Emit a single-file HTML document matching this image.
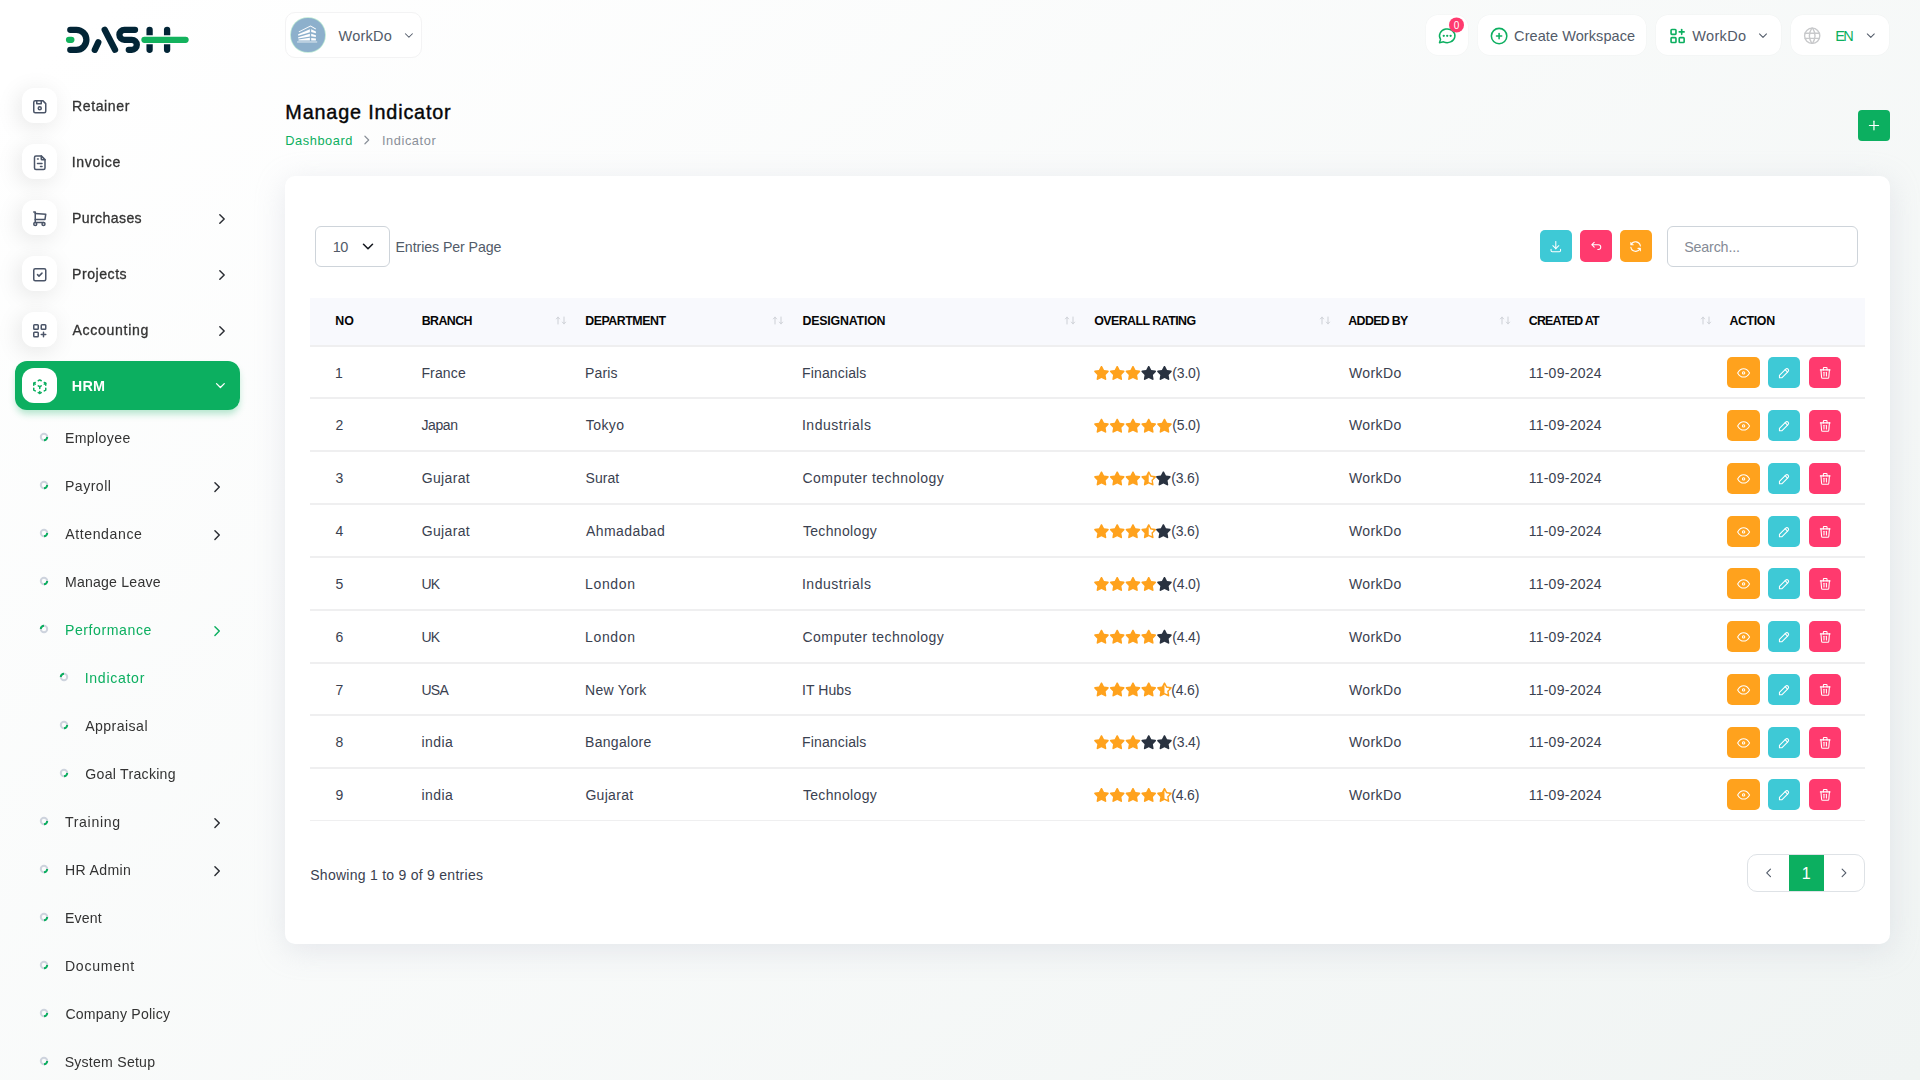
<!DOCTYPE html>
<html><head><meta charset="utf-8"><title>Manage Indicator</title><style>
html,body{margin:0;padding:0}
body{width:1920px;height:1080px;overflow:hidden;position:relative;font-family:"Liberation Sans",sans-serif;
background:linear-gradient(141.55deg,rgba(240,244,243,0) 3.46%,#f0f4f3 99.86%),#fff}
.t{position:absolute;white-space:pre}
.ic{position:absolute;overflow:visible}
.side{position:absolute;left:0;top:0;width:280px;height:1080px;will-change:transform}
.ibox{position:absolute;left:21.5px;width:35.5px;height:35px;border-radius:12px;background:#fff;box-shadow:-3px 4px 23px rgba(0,0,0,.1)}
.active{position:absolute;left:15px;top:361px;width:225px;height:49px;border-radius:12px;background:#0CAF60;box-shadow:0 5px 7px -1px rgba(12,175,96,.3)}
.wsel{position:absolute;left:285px;top:12px;width:135px;height:44px;border:1px solid #f3f3f4;border-radius:10px;background:#fff}
.avatar{position:absolute;left:291.4px;top:18.400px;width:33.2px;height:33.2px;border-radius:50%;background:#8db0cc;box-shadow:0 0 0 .8px rgba(12,175,96,.28)}
.pill{position:absolute;top:15px;height:40px;border-radius:12px;background:#fff;box-shadow:0 0 0 .6px rgba(0,0,0,.025)}
.badge{position:absolute;left:1449px;top:17px;width:15px;height:15px;border-radius:50%;background:#ff3a6e;color:#fff;font-size:9.5px;line-height:15px;text-align:center}
.addbtn{position:absolute;left:1858px;top:110px;width:32px;height:31px;border-radius:4px;background:#0CAF60}
.card{position:absolute;left:285px;top:175.5px;width:1605px;height:768.500px;border-radius:10px;background:#fff;box-shadow:0 6px 30px rgba(182,186,203,.3)}
.sel{position:absolute;left:315px;top:226px;width:72.5px;height:38.500px;border:1px solid #ced4da;border-radius:6px;background:#fff}
.search{position:absolute;left:1667px;top:226px;width:189px;height:38.500px;border:1px solid #ced4da;border-radius:6px;background:#fff}
.sbtn{position:absolute;top:230px;width:32px;height:32px;border-radius:5px}
.thead{position:absolute;left:310px;top:298px;width:1555px;height:47px;background:#f8f9fd;border-bottom:2px solid #efeff0;box-sizing:content-box}
.rline{position:absolute;left:310px;width:1555px;background:#efeff0}
.abtn{position:absolute;width:32px;height:31px;border-radius:5px}
.pag{position:absolute;left:1747px;top:854px;width:116px;height:36px;border:1px solid #dee2e6;border-radius:10px;background:#fff;overflow:hidden}
.pcur{position:absolute;left:41px;top:-1px;width:35px;height:39px;background:#0CAF60}
</style></head><body>
<div class="wsel"></div>
<div class="avatar"></div>
<svg class="ic" style="left:291px;top:18px" width="34" height="34" viewBox="291 18 34 34">
<g fill="#fff">
<path d="M298.7 31.5L310.55 25.6L315.9 28.6L315.7 29.5L310.55 26.6L299 32.3z"/>
<path d="M298.2 34.3L309.9 29.2V32.2L298.2 35.7z"/>
<path d="M298.2 37.2L309.9 33.8V36.4L298.2 38.4z"/>
<path d="M298.5 39.4L309.9 37.8V40.4H298.5z"/>
<path d="M311.2 29.2L315.9 31.4V33.2L311.2 31.9z"/>
<path d="M311.2 33.8L315.9 35.2V36.9L311.2 36.2z"/>
<path d="M311.2 37.9L315.9 38.4V40.4H311.2z"/>
<path d="M297.1 41H317.2V42.9H297.1z" opacity=".4"/>
</g></svg>
<span class="t" style="left:338.50px;top:27.90px;font-size:14.5px;line-height:16px;color:#525b69;letter-spacing:0.239px;">WorkDo</span>
<svg class="ic" style="left:401px;top:28px" width="15" height="15" viewBox="-1.543 -0.857 25.714 25.714" fill="none" stroke="#525b69" stroke-width="1.8" stroke-linecap="round" stroke-linejoin="round"><polyline points="6 9 12 15 18 9"/></svg>
<div class="pill" style="left:1426px;width:42px"></div>
<svg class="ic" style="left:1436px;top:25px" width="22" height="22" viewBox="-1.049 -0.583 25.631 25.631" fill="none" stroke="#0CAF60" stroke-width="1.7" stroke-linecap="round" stroke-linejoin="round"><path d="M3 20l1.3 -3.9a9 8 0 1 1 3.4 2.9l-4.7 1"/><g stroke-width="2.7"><line x1="12" y1="12" x2="12" y2="12.01"/><line x1="8" y1="12" x2="8" y2="12.01"/><line x1="16" y1="12" x2="16" y2="12.01"/></g></svg>
<svg class="ic" style="left:1446px;top:14px" width="22" height="22" viewBox="1446 14 22 22"><circle cx="1456.5" cy="24.9" r="7.5" fill="#ff3a6e"/></svg>
<span class="t" style="left:1456.50px;top:19.60px;font-size:10px;line-height:11px;color:#fff;transform:translateX(-50%);">0</span>
<div class="pill" style="left:1478px;width:168px"></div>
<svg class="ic" style="left:1488px;top:25px" width="22" height="22" viewBox="-0.932 -0.932 25.631 25.631" fill="none" stroke="#0CAF60" stroke-width="1.8" stroke-linecap="round" stroke-linejoin="round"><circle cx="12" cy="12" r="9"/><line x1="9" y1="12" x2="15" y2="12"/><line x1="12" y1="9" x2="12" y2="15"/></svg>
<span class="t" style="left:1514.08px;top:27.90px;font-size:14.5px;line-height:16px;color:#525b69;letter-spacing:0.081px;">Create Workspace</span>
<div class="pill" style="left:1656px;width:125px"></div>
<svg class="ic" style="left:1667px;top:26px" width="21" height="21" viewBox="-0.980 -0.245 25.714 25.714" fill="none" stroke="#0CAF60" stroke-width="2" stroke-linecap="round" stroke-linejoin="round"><rect x="4" y="4" width="6" height="6" rx="1"/><rect x="4" y="14" width="6" height="6" rx="1"/><rect x="14" y="14" width="6" height="6" rx="1"/><line x1="14" y1="7" x2="20" y2="7"/><line x1="17" y1="4" x2="17" y2="10"/></svg>
<span class="t" style="left:1692.30px;top:28.00px;font-size:14.5px;line-height:16px;color:#525b69;letter-spacing:0.319px;">WorkDo</span>
<svg class="ic" style="left:1756px;top:28px" width="15" height="15" viewBox="-0.000 -1.200 25.714 25.714" fill="none" stroke="#525b69" stroke-width="1.8" stroke-linecap="round" stroke-linejoin="round"><polyline points="6 9 12 15 18 9"/></svg>
<div class="pill" style="left:1791px;width:98px"></div>
<svg class="ic" style="left:1802px;top:25px" width="22" height="22" viewBox="-0.059 -0.768 26.010 26.010" fill="none" stroke="#c8c9cb" stroke-width="1.6" stroke-linecap="round" stroke-linejoin="round"><circle cx="12" cy="12" r="9"/><line x1="3.6" y1="9" x2="20.4" y2="9"/><line x1="3.6" y1="15" x2="20.4" y2="15"/><path d="M11.5 3a17 17 0 0 0 0 18"/><path d="M12.5 3a17 17 0 0 1 0 18"/></svg>
<span class="t" style="left:1835.14px;top:27.90px;font-size:14.5px;line-height:16px;color:#0CAF60;letter-spacing:-1.564px;">EN</span>
<svg class="ic" style="left:1863px;top:28px" width="15" height="15" viewBox="-1.371 -1.200 25.714 25.714" fill="none" stroke="#525b69" stroke-width="1.8" stroke-linecap="round" stroke-linejoin="round"><polyline points="6 9 12 15 18 9"/></svg>
<span class="t" style="left:285.32px;top:100.50px;font-size:19.8px;line-height:22px;color:#060606;letter-spacing:0.836px;-webkit-text-stroke:0.4px #060606;">Manage Indicator</span>
<span class="t" style="left:285.18px;top:132.90px;font-size:12.8px;line-height:15px;color:#0CAF60;letter-spacing:0.586px;">Dashboard</span>
<svg class="ic" style="left:359px;top:132px" width="16" height="16" viewBox="-0.480 -0.800 25.600 25.600" fill="none" stroke="#8a9099" stroke-width="1.9" stroke-linecap="round" stroke-linejoin="round"><polyline points="9 6 15 12 9 18"/></svg>
<span class="t" style="left:381.95px;top:132.90px;font-size:12.8px;line-height:15px;color:#8a9099;letter-spacing:0.578px;">Indicator</span>
<div class="addbtn"></div>
<svg class="ic" style="left:1864px;top:116px" width="20" height="20" viewBox="1864 116 20 20" stroke="#fff" stroke-linecap="round" fill="none"><path d="M1869.4 125.5H1878.6" stroke-width="1.15"/><path d="M1873.95 121.2V129.8" stroke-width="1.25"/></svg>
<div class="card"></div>
<div class="sel"></div>
<span class="t" style="left:332.81px;top:239.00px;font-size:14.5px;line-height:16px;color:#525b69;letter-spacing:-0.517px;">10</span>
<svg class="ic" style="left:359px;top:237px" width="19" height="19" viewBox="-0.000 -0.667 25.333 25.333" fill="none" stroke="#15181f" stroke-width="2.1" stroke-linecap="round" stroke-linejoin="round"><polyline points="6 9 12 15 18 9"/></svg>
<span class="t" style="left:395.46px;top:239.00px;font-size:14.2px;line-height:16px;color:#525b69;letter-spacing:-0.082px;">Entries Per Page</span>
<div class="sbtn" style="left:1540px;background:#3ec9d6"></div>
<svg class="ic" style="left:1548px;top:239px" width="16" height="16" viewBox="-1.091 -0.252 26.853 26.853" fill="none" stroke="#fff" stroke-width="1.75" stroke-linecap="round" stroke-linejoin="round"><path d="M4 17v2a2 2 0 0 0 2 2h12a2 2 0 0 0 2 -2v-2"/><polyline points="7 11 12 16 17 11"/><line x1="12" y1="4" x2="12" y2="16"/></svg>
<div class="sbtn" style="left:1580px;background:#ff3a6e"></div>
<svg class="ic" style="left:1588px;top:239px" width="16" height="16" viewBox="-1.427 -0.587 26.853 26.853" fill="none" stroke="#fff" stroke-width="1.75" stroke-linecap="round" stroke-linejoin="round"><path d="M9 13l-4 -4l4 -4m-4 4h11a4 4 0 0 1 0 8h-1"/></svg>
<div class="sbtn" style="left:1620px;background:#ffa21d"></div>
<svg class="ic" style="left:1628px;top:239px" width="16" height="16" viewBox="-0.755 -0.755 26.853 26.853" fill="none" stroke="#fff" stroke-width="1.75" stroke-linecap="round" stroke-linejoin="round"><path d="M20 11a8.1 8.1 0 0 0 -15.5 -2m-.5 -4v4h4"/><path d="M4 13a8.1 8.1 0 0 0 15.5 2m.5 4v-4h-4"/></svg>
<div class="search"></div>
<span class="t" style="left:1684.16px;top:239.00px;font-size:14.3px;line-height:16px;color:#858b96;letter-spacing:-0.179px;">Search...</span>
<div class="thead"></div>
<span class="t" style="left:335.19px;top:314.00px;font-size:12.4px;line-height:14px;color:#060606;font-weight:700;letter-spacing:0.125px;">NO</span>
<span class="t" style="left:421.69px;top:314.00px;font-size:12.4px;line-height:14px;color:#060606;font-weight:700;letter-spacing:-0.578px;">BRANCH</span>
<svg class="ic" style="left:555.0px;top:316px" width="12" height="9" viewBox="0 0 12 9" fill="none" stroke="#cdd0d6" stroke-width="1" stroke-linecap="round" stroke-linejoin="round"><path d="M3 8V1.2M1.4 2.9L3 1.2L4.6 2.9M9 1V7.8M7.4 6.1L9 7.8L10.6 6.1"/></svg>
<span class="t" style="left:585.19px;top:314.00px;font-size:12.4px;line-height:14px;color:#060606;font-weight:700;letter-spacing:-0.485px;">DEPARTMENT</span>
<svg class="ic" style="left:772.0px;top:316px" width="12" height="9" viewBox="0 0 12 9" fill="none" stroke="#cdd0d6" stroke-width="1" stroke-linecap="round" stroke-linejoin="round"><path d="M3 8V1.2M1.4 2.9L3 1.2L4.6 2.9M9 1V7.8M7.4 6.1L9 7.8L10.6 6.1"/></svg>
<span class="t" style="left:802.39px;top:314.00px;font-size:12.4px;line-height:14px;color:#060606;font-weight:700;letter-spacing:-0.196px;">DESIGNATION</span>
<svg class="ic" style="left:1064.0px;top:316px" width="12" height="9" viewBox="0 0 12 9" fill="none" stroke="#cdd0d6" stroke-width="1" stroke-linecap="round" stroke-linejoin="round"><path d="M3 8V1.2M1.4 2.9L3 1.2L4.6 2.9M9 1V7.8M7.4 6.1L9 7.8L10.6 6.1"/></svg>
<span class="t" style="left:1094.20px;top:314.00px;font-size:12.4px;line-height:14px;color:#060606;font-weight:700;letter-spacing:-0.545px;">OVERALL RATING</span>
<svg class="ic" style="left:1318.5px;top:316px" width="12" height="9" viewBox="0 0 12 9" fill="none" stroke="#cdd0d6" stroke-width="1" stroke-linecap="round" stroke-linejoin="round"><path d="M3 8V1.2M1.4 2.9L3 1.2L4.6 2.9M9 1V7.8M7.4 6.1L9 7.8L10.6 6.1"/></svg>
<span class="t" style="left:1348.35px;top:314.00px;font-size:12.4px;line-height:14px;color:#060606;font-weight:700;letter-spacing:-0.681px;">ADDED BY</span>
<svg class="ic" style="left:1498.5px;top:316px" width="12" height="9" viewBox="0 0 12 9" fill="none" stroke="#cdd0d6" stroke-width="1" stroke-linecap="round" stroke-linejoin="round"><path d="M3 8V1.2M1.4 2.9L3 1.2L4.6 2.9M9 1V7.8M7.4 6.1L9 7.8L10.6 6.1"/></svg>
<span class="t" style="left:1528.70px;top:314.00px;font-size:12.4px;line-height:14px;color:#060606;font-weight:700;letter-spacing:-0.75px;">CREATED AT</span>
<svg class="ic" style="left:1699.5px;top:316px" width="12" height="9" viewBox="0 0 12 9" fill="none" stroke="#cdd0d6" stroke-width="1" stroke-linecap="round" stroke-linejoin="round"><path d="M3 8V1.2M1.4 2.9L3 1.2L4.6 2.9M9 1V7.8M7.4 6.1L9 7.8L10.6 6.1"/></svg>
<span class="t" style="left:1729.45px;top:314.00px;font-size:12.4px;line-height:14px;color:#060606;font-weight:700;letter-spacing:-0.37px;">ACTION</span>
<svg width="0" height="0" style="position:absolute"><defs><clipPath id="rh"><rect x="288" y="0" width="288" height="512"/></clipPath></defs></svg>
<div class="rline" style="top:397px;height:2px"></div>
<span class="t" style="left:335.00px;top:365.00px;font-size:14px;line-height:16px;color:#3a4150;">1</span>
<span class="t" style="left:421.38px;top:365.00px;font-size:14px;line-height:16px;color:#3a4150;letter-spacing:0.165px;">France</span>
<span class="t" style="left:584.98px;top:365.00px;font-size:14px;line-height:16px;color:#3a4150;letter-spacing:0.153px;">Paris</span>
<span class="t" style="left:802.08px;top:365.00px;font-size:14px;line-height:16px;color:#3a4150;letter-spacing:0.131px;">Financials</span>
<svg class="ic" style="left:1093px;top:365px" width="82" height="16" viewBox="0 0 2998.9 585.1"><path d="M259.3 17.8L194 150.2 47.9 171.5c-26.2 3.8-36.7 36.1-17.7 54.6l105.7 103-25 145.5c-4.5 26.3 23.2 46 46.4 33.7L288 439.6l130.7 68.7c23.2 12.2 50.9-7.4 46.4-33.700l-25-145.5 105.7-103c19-18.5 8.5-50.8-17.7-54.6L382 150.2 316.7 17.8c-11.7-23.6-45.6-23.9-57.4 0z" fill="#ffa21d" transform="translate(21.9 32.9)"/><path d="M259.3 17.8L194 150.2 47.9 171.5c-26.2 3.8-36.7 36.1-17.7 54.6l105.7 103-25 145.5c-4.5 26.3 23.2 46 46.4 33.7L288 439.6l130.7 68.7c23.2 12.2 50.9-7.4 46.4-33.700l-25-145.5 105.7-103c19-18.5 8.5-50.8-17.7-54.6L382 150.2 316.7 17.8c-11.7-23.6-45.6-23.9-57.4 0z" fill="#ffa21d" transform="translate(597.9 32.9)"/><path d="M259.3 17.8L194 150.2 47.9 171.5c-26.2 3.8-36.7 36.1-17.7 54.6l105.7 103-25 145.5c-4.5 26.3 23.2 46 46.4 33.7L288 439.6l130.7 68.7c23.2 12.2 50.9-7.4 46.4-33.700l-25-145.5 105.7-103c19-18.5 8.5-50.8-17.7-54.6L382 150.2 316.7 17.8c-11.7-23.6-45.6-23.9-57.4 0z" fill="#ffa21d" transform="translate(1173.9 32.9)"/><path d="M259.3 17.8L194 150.2 47.9 171.5c-26.2 3.8-36.7 36.1-17.7 54.6l105.7 103-25 145.5c-4.5 26.3 23.2 46 46.4 33.7L288 439.6l130.7 68.7c23.2 12.2 50.9-7.4 46.4-33.700l-25-145.5 105.7-103c19-18.5 8.5-50.8-17.7-54.6L382 150.2 316.7 17.8c-11.7-23.6-45.6-23.9-57.4 0z" fill="#293240" transform="translate(1749.9 32.9)"/><path d="M259.3 17.8L194 150.2 47.9 171.5c-26.2 3.8-36.7 36.1-17.7 54.6l105.7 103-25 145.5c-4.5 26.3 23.2 46 46.4 33.7L288 439.6l130.7 68.7c23.2 12.2 50.9-7.4 46.4-33.700l-25-145.5 105.7-103c19-18.5 8.5-50.8-17.7-54.6L382 150.2 316.7 17.8c-11.7-23.6-45.6-23.9-57.4 0z" fill="#293240" transform="translate(2325.9 32.9)"/></svg><span class="t" style="left:1172.26px;top:365.00px;font-size:14px;line-height:16px;color:#3a4150;letter-spacing:-0.159px;">(3.0)</span>
<span class="t" style="left:1348.90px;top:365.00px;font-size:14px;line-height:16px;color:#3a4150;letter-spacing:0.414px;">WorkDo</span>
<span class="t" style="left:1528.65px;top:365.00px;font-size:14px;line-height:16px;color:#3a4150;letter-spacing:0.26px;">11-09-2024</span>
<div class="abtn" style="left:1727px;top:357.00px;background:#ffa21d;width:33px"></div>
<svg class="ic" style="left:1736px;top:365px" width="16" height="16" viewBox="-0.755 -1.259 26.853 26.853" fill="none" stroke="#fff" stroke-width="1.75" stroke-linecap="round" stroke-linejoin="round"><circle cx="12" cy="12" r="2"/><path d="M22 12c-2.667 4.667 -6 7 -10 7s-7.333 -2.333 -10 -7c2.667 -4.667 6 -7 10 -7s7.333 2.333 10 7"/></svg>
<div class="abtn" style="left:1768px;top:357.00px;background:#3ec9d6"></div>
<svg class="ic" style="left:1777px;top:365px" width="16" height="16" viewBox="-0.084 -1.427 26.853 26.853" fill="none" stroke="#fff" stroke-width="1.75" stroke-linecap="round" stroke-linejoin="round"><path d="M4 20h4l10.5 -10.5a1.5 1.5 0 0 0 -4 -4l-10.5 10.5v4"/><line x1="13.5" y1="6.5" x2="17.5" y2="10.5"/></svg>
<div class="abtn" style="left:1809px;top:357.00px;background:#ff3a6e"></div>
<svg class="ic" style="left:1817px;top:365px" width="16" height="16" viewBox="-1.572 -1.076 26.483 26.483" fill="none" stroke="#fff" stroke-width="1.75" stroke-linecap="round" stroke-linejoin="round"><line x1="4" y1="7" x2="20" y2="7"/><line x1="10" y1="11" x2="10" y2="17"/><line x1="14" y1="11" x2="14" y2="17"/><path d="M5 7l1 12a2 2 0 0 0 2 2h8a2 2 0 0 0 2 -2l1 -12"/><path d="M9 7v-3a1 1 0 0 1 1 -1h4a1 1 0 0 1 1 1v3"/></svg>
<div class="rline" style="top:450px;height:2px"></div>
<span class="t" style="left:335.40px;top:417.00px;font-size:14px;line-height:16px;color:#3a4150;">2</span>
<span class="t" style="left:421.49px;top:417.00px;font-size:14px;line-height:16px;color:#3a4150;letter-spacing:-0.395px;">Japan</span>
<span class="t" style="left:585.82px;top:417.00px;font-size:14px;line-height:16px;color:#3a4150;letter-spacing:0.408px;">Tokyo</span>
<span class="t" style="left:801.94px;top:417.00px;font-size:14px;line-height:16px;color:#3a4150;letter-spacing:0.514px;">Industrials</span>
<svg class="ic" style="left:1093px;top:418px" width="82" height="16" viewBox="0 0 2998.9 585.1"><path d="M259.3 17.8L194 150.2 47.9 171.5c-26.2 3.8-36.7 36.1-17.7 54.6l105.7 103-25 145.5c-4.5 26.3 23.2 46 46.4 33.7L288 439.6l130.7 68.7c23.2 12.2 50.9-7.4 46.4-33.700l-25-145.5 105.7-103c19-18.5 8.5-50.8-17.7-54.6L382 150.2 316.7 17.8c-11.7-23.6-45.6-23.9-57.4 0z" fill="#ffa21d" transform="translate(21.9 23.8)"/><path d="M259.3 17.8L194 150.2 47.9 171.5c-26.2 3.8-36.7 36.1-17.7 54.6l105.7 103-25 145.5c-4.5 26.3 23.2 46 46.4 33.7L288 439.6l130.7 68.7c23.2 12.2 50.9-7.4 46.4-33.700l-25-145.5 105.7-103c19-18.5 8.5-50.8-17.7-54.6L382 150.2 316.7 17.8c-11.7-23.6-45.6-23.9-57.4 0z" fill="#ffa21d" transform="translate(597.9 23.8)"/><path d="M259.3 17.8L194 150.2 47.9 171.5c-26.2 3.8-36.7 36.1-17.7 54.6l105.7 103-25 145.5c-4.5 26.3 23.2 46 46.4 33.7L288 439.6l130.7 68.7c23.2 12.2 50.9-7.4 46.4-33.700l-25-145.5 105.7-103c19-18.5 8.5-50.8-17.7-54.6L382 150.2 316.7 17.8c-11.7-23.6-45.6-23.9-57.4 0z" fill="#ffa21d" transform="translate(1173.9 23.8)"/><path d="M259.3 17.8L194 150.2 47.9 171.5c-26.2 3.8-36.7 36.1-17.7 54.6l105.7 103-25 145.5c-4.5 26.3 23.2 46 46.4 33.7L288 439.6l130.7 68.7c23.2 12.2 50.9-7.4 46.4-33.700l-25-145.5 105.7-103c19-18.5 8.5-50.8-17.7-54.6L382 150.2 316.7 17.8c-11.7-23.6-45.6-23.9-57.4 0z" fill="#ffa21d" transform="translate(1749.9 23.8)"/><path d="M259.3 17.8L194 150.2 47.9 171.5c-26.2 3.8-36.7 36.1-17.7 54.6l105.7 103-25 145.5c-4.5 26.3 23.2 46 46.4 33.7L288 439.6l130.7 68.7c23.2 12.2 50.9-7.4 46.4-33.700l-25-145.5 105.7-103c19-18.5 8.5-50.8-17.7-54.6L382 150.2 316.7 17.8c-11.7-23.6-45.6-23.9-57.4 0z" fill="#ffa21d" transform="translate(2325.9 23.8)"/></svg><span class="t" style="left:1172.26px;top:417.00px;font-size:14px;line-height:16px;color:#3a4150;letter-spacing:-0.159px;">(5.0)</span>
<span class="t" style="left:1348.90px;top:417.00px;font-size:14px;line-height:16px;color:#3a4150;letter-spacing:0.414px;">WorkDo</span>
<span class="t" style="left:1528.65px;top:417.00px;font-size:14px;line-height:16px;color:#3a4150;letter-spacing:0.26px;">11-09-2024</span>
<div class="abtn" style="left:1727px;top:410.00px;background:#ffa21d;width:33px"></div>
<svg class="ic" style="left:1736px;top:418px" width="16" height="16" viewBox="-0.755 -1.259 26.853 26.853" fill="none" stroke="#fff" stroke-width="1.75" stroke-linecap="round" stroke-linejoin="round"><circle cx="12" cy="12" r="2"/><path d="M22 12c-2.667 4.667 -6 7 -10 7s-7.333 -2.333 -10 -7c2.667 -4.667 6 -7 10 -7s7.333 2.333 10 7"/></svg>
<div class="abtn" style="left:1768px;top:410.00px;background:#3ec9d6"></div>
<svg class="ic" style="left:1777px;top:418px" width="16" height="16" viewBox="-0.084 -1.427 26.853 26.853" fill="none" stroke="#fff" stroke-width="1.75" stroke-linecap="round" stroke-linejoin="round"><path d="M4 20h4l10.5 -10.5a1.5 1.5 0 0 0 -4 -4l-10.5 10.5v4"/><line x1="13.5" y1="6.5" x2="17.5" y2="10.5"/></svg>
<div class="abtn" style="left:1809px;top:410.00px;background:#ff3a6e"></div>
<svg class="ic" style="left:1817px;top:418px" width="16" height="16" viewBox="-1.572 -1.076 26.483 26.483" fill="none" stroke="#fff" stroke-width="1.75" stroke-linecap="round" stroke-linejoin="round"><line x1="4" y1="7" x2="20" y2="7"/><line x1="10" y1="11" x2="10" y2="17"/><line x1="14" y1="11" x2="14" y2="17"/><path d="M5 7l1 12a2 2 0 0 0 2 2h8a2 2 0 0 0 2 -2l1 -12"/><path d="M9 7v-3a1 1 0 0 1 1 -1h4a1 1 0 0 1 1 1v3"/></svg>
<div class="rline" style="top:503px;height:2px"></div>
<span class="t" style="left:335.40px;top:470.00px;font-size:14px;line-height:16px;color:#3a4150;">3</span>
<span class="t" style="left:421.80px;top:470.00px;font-size:14px;line-height:16px;color:#3a4150;letter-spacing:0.322px;">Gujarat</span>
<span class="t" style="left:585.47px;top:470.00px;font-size:14px;line-height:16px;color:#3a4150;letter-spacing:0.077px;">Surat</span>
<span class="t" style="left:802.50px;top:470.00px;font-size:14px;line-height:16px;color:#3a4150;letter-spacing:0.457px;">Computer technology</span>
<svg class="ic" style="left:1093px;top:471px" width="82" height="16" viewBox="0 0 2998.9 585.1"><path d="M259.3 17.8L194 150.2 47.9 171.5c-26.2 3.8-36.7 36.1-17.7 54.6l105.7 103-25 145.5c-4.5 26.3 23.2 46 46.4 33.7L288 439.6l130.7 68.7c23.2 12.2 50.9-7.4 46.4-33.700l-25-145.5 105.7-103c19-18.5 8.5-50.8-17.7-54.6L382 150.2 316.7 17.8c-11.7-23.6-45.6-23.9-57.4 0z" fill="#ffa21d" transform="translate(21.9 14.6)"/><path d="M259.3 17.8L194 150.2 47.9 171.5c-26.2 3.8-36.7 36.1-17.7 54.6l105.7 103-25 145.5c-4.5 26.3 23.2 46 46.4 33.7L288 439.6l130.7 68.7c23.2 12.2 50.9-7.4 46.4-33.700l-25-145.5 105.7-103c19-18.5 8.5-50.8-17.7-54.6L382 150.2 316.7 17.8c-11.7-23.6-45.6-23.9-57.4 0z" fill="#ffa21d" transform="translate(597.9 14.6)"/><path d="M259.3 17.8L194 150.2 47.9 171.5c-26.2 3.8-36.7 36.1-17.7 54.6l105.7 103-25 145.5c-4.5 26.3 23.2 46 46.4 33.7L288 439.6l130.7 68.7c23.2 12.2 50.9-7.4 46.4-33.700l-25-145.5 105.7-103c19-18.5 8.5-50.8-17.7-54.6L382 150.2 316.7 17.8c-11.7-23.6-45.6-23.9-57.4 0z" fill="#ffa21d" transform="translate(1173.9 14.6)"/><g transform="translate(1749.9 14.6)"><path d="M259.3 17.8L194 150.2 47.9 171.5c-26.2 3.8-36.7 36.1-17.7 54.6l105.7 103-25 145.5c-4.5 26.3 23.2 46 46.4 33.7L288 439.6l130.7 68.7c23.2 12.2 50.9-7.4 46.4-33.700l-25-145.5 105.7-103c19-18.5 8.5-50.8-17.7-54.6L382 150.2 316.7 17.8c-11.7-23.6-45.6-23.9-57.4 0z" fill="#ffa21d"/><g clip-path="url(#rh)"><path d="M259.3 17.8L194 150.2 47.9 171.5c-26.2 3.8-36.7 36.1-17.7 54.6l105.7 103-25 145.5c-4.5 26.3 23.2 46 46.4 33.7L288 439.6l130.7 68.7c23.2 12.2 50.9-7.4 46.4-33.700l-25-145.5 105.7-103c19-18.5 8.5-50.8-17.7-54.6L382 150.2 316.7 17.8c-11.7-23.6-45.6-23.9-57.4 0z" fill="#fff" transform="translate(288 285) scale(0.64) translate(-288 -285)"/></g></g><path d="M259.3 17.8L194 150.2 47.9 171.5c-26.2 3.8-36.7 36.1-17.7 54.6l105.7 103-25 145.5c-4.5 26.3 23.2 46 46.4 33.7L288 439.6l130.7 68.7c23.2 12.2 50.9-7.4 46.4-33.700l-25-145.5 105.7-103c19-18.5 8.5-50.8-17.7-54.6L382 150.2 316.7 17.8c-11.7-23.6-45.6-23.9-57.4 0z" fill="#293240" transform="translate(2286.1 14.6)"/></svg><span class="t" style="left:1171.17px;top:470.00px;font-size:14px;line-height:16px;color:#3a4150;letter-spacing:-0.159px;">(3.6)</span>
<span class="t" style="left:1348.90px;top:470.00px;font-size:14px;line-height:16px;color:#3a4150;letter-spacing:0.414px;">WorkDo</span>
<span class="t" style="left:1528.65px;top:470.00px;font-size:14px;line-height:16px;color:#3a4150;letter-spacing:0.26px;">11-09-2024</span>
<div class="abtn" style="left:1727px;top:463.00px;background:#ffa21d;width:33px"></div>
<svg class="ic" style="left:1736px;top:471px" width="16" height="16" viewBox="-0.755 -1.259 26.853 26.853" fill="none" stroke="#fff" stroke-width="1.75" stroke-linecap="round" stroke-linejoin="round"><circle cx="12" cy="12" r="2"/><path d="M22 12c-2.667 4.667 -6 7 -10 7s-7.333 -2.333 -10 -7c2.667 -4.667 6 -7 10 -7s7.333 2.333 10 7"/></svg>
<div class="abtn" style="left:1768px;top:463.00px;background:#3ec9d6"></div>
<svg class="ic" style="left:1777px;top:471px" width="16" height="16" viewBox="-0.084 -1.427 26.853 26.853" fill="none" stroke="#fff" stroke-width="1.75" stroke-linecap="round" stroke-linejoin="round"><path d="M4 20h4l10.5 -10.5a1.5 1.5 0 0 0 -4 -4l-10.5 10.5v4"/><line x1="13.5" y1="6.5" x2="17.5" y2="10.5"/></svg>
<div class="abtn" style="left:1809px;top:463.00px;background:#ff3a6e"></div>
<svg class="ic" style="left:1817px;top:471px" width="16" height="16" viewBox="-1.572 -1.076 26.483 26.483" fill="none" stroke="#fff" stroke-width="1.75" stroke-linecap="round" stroke-linejoin="round"><line x1="4" y1="7" x2="20" y2="7"/><line x1="10" y1="11" x2="10" y2="17"/><line x1="14" y1="11" x2="14" y2="17"/><path d="M5 7l1 12a2 2 0 0 0 2 2h8a2 2 0 0 0 2 -2l1 -12"/><path d="M9 7v-3a1 1 0 0 1 1 -1h4a1 1 0 0 1 1 1v3"/></svg>
<div class="rline" style="top:556px;height:2px"></div>
<span class="t" style="left:335.40px;top:523.00px;font-size:14px;line-height:16px;color:#3a4150;">4</span>
<span class="t" style="left:421.80px;top:523.00px;font-size:14px;line-height:16px;color:#3a4150;letter-spacing:0.322px;">Gujarat</span>
<span class="t" style="left:586.10px;top:523.00px;font-size:14px;line-height:16px;color:#3a4150;letter-spacing:0.407px;">Ahmadabad</span>
<span class="t" style="left:802.92px;top:523.00px;font-size:14px;line-height:16px;color:#3a4150;letter-spacing:0.339px;">Technology</span>
<svg class="ic" style="left:1093px;top:524px" width="82" height="16" viewBox="0 0 2998.9 585.1"><path d="M259.3 17.8L194 150.2 47.9 171.5c-26.2 3.8-36.7 36.1-17.7 54.6l105.7 103-25 145.5c-4.5 26.3 23.2 46 46.4 33.7L288 439.6l130.7 68.7c23.2 12.2 50.9-7.4 46.4-33.700l-25-145.5 105.7-103c19-18.5 8.5-50.8-17.7-54.6L382 150.2 316.7 17.8c-11.7-23.6-45.6-23.9-57.4 0z" fill="#ffa21d" transform="translate(21.9 5.5)"/><path d="M259.3 17.8L194 150.2 47.9 171.5c-26.2 3.8-36.7 36.1-17.7 54.6l105.7 103-25 145.5c-4.5 26.3 23.2 46 46.4 33.7L288 439.6l130.7 68.7c23.2 12.2 50.9-7.4 46.4-33.700l-25-145.5 105.7-103c19-18.5 8.5-50.8-17.7-54.6L382 150.2 316.7 17.8c-11.7-23.6-45.6-23.9-57.4 0z" fill="#ffa21d" transform="translate(597.9 5.5)"/><path d="M259.3 17.8L194 150.2 47.9 171.5c-26.2 3.8-36.7 36.1-17.7 54.6l105.7 103-25 145.5c-4.5 26.3 23.2 46 46.4 33.7L288 439.6l130.7 68.7c23.2 12.2 50.9-7.4 46.4-33.700l-25-145.5 105.7-103c19-18.5 8.5-50.8-17.7-54.6L382 150.2 316.7 17.8c-11.7-23.6-45.6-23.9-57.4 0z" fill="#ffa21d" transform="translate(1173.9 5.5)"/><g transform="translate(1749.9 5.5)"><path d="M259.3 17.8L194 150.2 47.9 171.5c-26.2 3.8-36.7 36.1-17.7 54.6l105.7 103-25 145.5c-4.5 26.3 23.2 46 46.4 33.7L288 439.6l130.7 68.7c23.2 12.2 50.9-7.4 46.4-33.700l-25-145.5 105.7-103c19-18.5 8.5-50.8-17.7-54.6L382 150.2 316.7 17.8c-11.7-23.6-45.6-23.9-57.4 0z" fill="#ffa21d"/><g clip-path="url(#rh)"><path d="M259.3 17.8L194 150.2 47.9 171.5c-26.2 3.8-36.7 36.1-17.7 54.6l105.7 103-25 145.5c-4.5 26.3 23.2 46 46.4 33.7L288 439.6l130.7 68.7c23.2 12.2 50.9-7.4 46.4-33.700l-25-145.5 105.7-103c19-18.5 8.5-50.8-17.7-54.6L382 150.2 316.7 17.8c-11.7-23.6-45.6-23.9-57.4 0z" fill="#fff" transform="translate(288 285) scale(0.64) translate(-288 -285)"/></g></g><path d="M259.3 17.8L194 150.2 47.9 171.5c-26.2 3.8-36.7 36.1-17.7 54.6l105.7 103-25 145.5c-4.5 26.3 23.2 46 46.4 33.7L288 439.6l130.7 68.7c23.2 12.2 50.9-7.4 46.4-33.700l-25-145.5 105.7-103c19-18.5 8.5-50.8-17.7-54.6L382 150.2 316.7 17.8c-11.7-23.6-45.6-23.9-57.4 0z" fill="#293240" transform="translate(2286.1 5.5)"/></svg><span class="t" style="left:1171.17px;top:523.00px;font-size:14px;line-height:16px;color:#3a4150;letter-spacing:-0.159px;">(3.6)</span>
<span class="t" style="left:1348.90px;top:523.00px;font-size:14px;line-height:16px;color:#3a4150;letter-spacing:0.414px;">WorkDo</span>
<span class="t" style="left:1528.65px;top:523.00px;font-size:14px;line-height:16px;color:#3a4150;letter-spacing:0.26px;">11-09-2024</span>
<div class="abtn" style="left:1727px;top:516.00px;background:#ffa21d;width:33px"></div>
<svg class="ic" style="left:1736px;top:524px" width="16" height="16" viewBox="-0.755 -1.259 26.853 26.853" fill="none" stroke="#fff" stroke-width="1.75" stroke-linecap="round" stroke-linejoin="round"><circle cx="12" cy="12" r="2"/><path d="M22 12c-2.667 4.667 -6 7 -10 7s-7.333 -2.333 -10 -7c2.667 -4.667 6 -7 10 -7s7.333 2.333 10 7"/></svg>
<div class="abtn" style="left:1768px;top:516.00px;background:#3ec9d6"></div>
<svg class="ic" style="left:1777px;top:524px" width="16" height="16" viewBox="-0.084 -1.427 26.853 26.853" fill="none" stroke="#fff" stroke-width="1.75" stroke-linecap="round" stroke-linejoin="round"><path d="M4 20h4l10.5 -10.5a1.5 1.5 0 0 0 -4 -4l-10.5 10.5v4"/><line x1="13.5" y1="6.5" x2="17.5" y2="10.5"/></svg>
<div class="abtn" style="left:1809px;top:516.00px;background:#ff3a6e"></div>
<svg class="ic" style="left:1817px;top:524px" width="16" height="16" viewBox="-1.572 -1.076 26.483 26.483" fill="none" stroke="#fff" stroke-width="1.75" stroke-linecap="round" stroke-linejoin="round"><line x1="4" y1="7" x2="20" y2="7"/><line x1="10" y1="11" x2="10" y2="17"/><line x1="14" y1="11" x2="14" y2="17"/><path d="M5 7l1 12a2 2 0 0 0 2 2h8a2 2 0 0 0 2 -2l1 -12"/><path d="M9 7v-3a1 1 0 0 1 1 -1h4a1 1 0 0 1 1 1v3"/></svg>
<div class="rline" style="top:609px;height:2px"></div>
<span class="t" style="left:335.40px;top:576.00px;font-size:14px;line-height:16px;color:#3a4150;">5</span>
<span class="t" style="left:421.45px;top:576.00px;font-size:14px;line-height:16px;color:#3a4150;letter-spacing:-0.7px;">UK</span>
<span class="t" style="left:584.98px;top:576.00px;font-size:14px;line-height:16px;color:#3a4150;letter-spacing:0.672px;">London</span>
<span class="t" style="left:801.94px;top:576.00px;font-size:14px;line-height:16px;color:#3a4150;letter-spacing:0.514px;">Industrials</span>
<svg class="ic" style="left:1093px;top:576px" width="82" height="16" viewBox="0 0 2998.9 585.1"><path d="M259.3 17.8L194 150.2 47.9 171.5c-26.2 3.8-36.7 36.1-17.7 54.6l105.7 103-25 145.5c-4.5 26.3 23.2 46 46.4 33.7L288 439.6l130.7 68.7c23.2 12.2 50.9-7.4 46.4-33.700l-25-145.5 105.7-103c19-18.5 8.5-50.8-17.7-54.6L382 150.2 316.7 17.8c-11.7-23.6-45.6-23.9-57.4 0z" fill="#ffa21d" transform="translate(21.9 32.9)"/><path d="M259.3 17.8L194 150.2 47.9 171.5c-26.2 3.8-36.7 36.1-17.7 54.6l105.7 103-25 145.5c-4.5 26.3 23.2 46 46.4 33.7L288 439.6l130.7 68.7c23.2 12.2 50.9-7.4 46.4-33.700l-25-145.5 105.7-103c19-18.5 8.5-50.8-17.7-54.6L382 150.2 316.7 17.8c-11.7-23.6-45.6-23.9-57.4 0z" fill="#ffa21d" transform="translate(597.9 32.9)"/><path d="M259.3 17.8L194 150.2 47.9 171.5c-26.2 3.8-36.7 36.1-17.7 54.6l105.7 103-25 145.5c-4.5 26.3 23.2 46 46.4 33.7L288 439.6l130.7 68.7c23.2 12.2 50.9-7.4 46.4-33.700l-25-145.5 105.7-103c19-18.5 8.5-50.8-17.7-54.6L382 150.2 316.7 17.8c-11.7-23.6-45.6-23.9-57.4 0z" fill="#ffa21d" transform="translate(1173.9 32.9)"/><path d="M259.3 17.8L194 150.2 47.9 171.5c-26.2 3.8-36.7 36.1-17.7 54.6l105.7 103-25 145.5c-4.5 26.3 23.2 46 46.4 33.7L288 439.6l130.7 68.7c23.2 12.2 50.9-7.4 46.4-33.700l-25-145.5 105.7-103c19-18.5 8.5-50.8-17.7-54.6L382 150.2 316.7 17.8c-11.7-23.6-45.6-23.9-57.4 0z" fill="#ffa21d" transform="translate(1749.9 32.9)"/><path d="M259.3 17.8L194 150.2 47.9 171.5c-26.2 3.8-36.7 36.1-17.7 54.6l105.7 103-25 145.5c-4.5 26.3 23.2 46 46.4 33.7L288 439.6l130.7 68.7c23.2 12.2 50.9-7.4 46.4-33.700l-25-145.5 105.7-103c19-18.5 8.5-50.8-17.7-54.6L382 150.2 316.7 17.8c-11.7-23.6-45.6-23.9-57.4 0z" fill="#293240" transform="translate(2325.9 32.9)"/></svg><span class="t" style="left:1172.26px;top:576.00px;font-size:14px;line-height:16px;color:#3a4150;letter-spacing:-0.159px;">(4.0)</span>
<span class="t" style="left:1348.90px;top:576.00px;font-size:14px;line-height:16px;color:#3a4150;letter-spacing:0.414px;">WorkDo</span>
<span class="t" style="left:1528.65px;top:576.00px;font-size:14px;line-height:16px;color:#3a4150;letter-spacing:0.26px;">11-09-2024</span>
<div class="abtn" style="left:1727px;top:568.00px;background:#ffa21d;width:33px"></div>
<svg class="ic" style="left:1736px;top:576px" width="16" height="16" viewBox="-0.755 -1.259 26.853 26.853" fill="none" stroke="#fff" stroke-width="1.75" stroke-linecap="round" stroke-linejoin="round"><circle cx="12" cy="12" r="2"/><path d="M22 12c-2.667 4.667 -6 7 -10 7s-7.333 -2.333 -10 -7c2.667 -4.667 6 -7 10 -7s7.333 2.333 10 7"/></svg>
<div class="abtn" style="left:1768px;top:568.00px;background:#3ec9d6"></div>
<svg class="ic" style="left:1777px;top:576px" width="16" height="16" viewBox="-0.084 -1.427 26.853 26.853" fill="none" stroke="#fff" stroke-width="1.75" stroke-linecap="round" stroke-linejoin="round"><path d="M4 20h4l10.5 -10.5a1.5 1.5 0 0 0 -4 -4l-10.5 10.5v4"/><line x1="13.5" y1="6.5" x2="17.5" y2="10.5"/></svg>
<div class="abtn" style="left:1809px;top:568.00px;background:#ff3a6e"></div>
<svg class="ic" style="left:1817px;top:576px" width="16" height="16" viewBox="-1.572 -1.076 26.483 26.483" fill="none" stroke="#fff" stroke-width="1.75" stroke-linecap="round" stroke-linejoin="round"><line x1="4" y1="7" x2="20" y2="7"/><line x1="10" y1="11" x2="10" y2="17"/><line x1="14" y1="11" x2="14" y2="17"/><path d="M5 7l1 12a2 2 0 0 0 2 2h8a2 2 0 0 0 2 -2l1 -12"/><path d="M9 7v-3a1 1 0 0 1 1 -1h4a1 1 0 0 1 1 1v3"/></svg>
<div class="rline" style="top:662px;height:2px"></div>
<span class="t" style="left:335.40px;top:629.00px;font-size:14px;line-height:16px;color:#3a4150;">6</span>
<span class="t" style="left:421.45px;top:629.00px;font-size:14px;line-height:16px;color:#3a4150;letter-spacing:-0.7px;">UK</span>
<span class="t" style="left:584.98px;top:629.00px;font-size:14px;line-height:16px;color:#3a4150;letter-spacing:0.672px;">London</span>
<span class="t" style="left:802.50px;top:629.00px;font-size:14px;line-height:16px;color:#3a4150;letter-spacing:0.457px;">Computer technology</span>
<svg class="ic" style="left:1093px;top:629px" width="82" height="16" viewBox="0 0 2998.9 585.1"><path d="M259.3 17.8L194 150.2 47.9 171.5c-26.2 3.8-36.7 36.1-17.7 54.6l105.7 103-25 145.5c-4.5 26.3 23.2 46 46.4 33.7L288 439.6l130.7 68.7c23.2 12.2 50.9-7.4 46.4-33.700l-25-145.5 105.7-103c19-18.5 8.5-50.8-17.7-54.6L382 150.2 316.7 17.8c-11.7-23.6-45.6-23.9-57.4 0z" fill="#ffa21d" transform="translate(21.9 23.8)"/><path d="M259.3 17.8L194 150.2 47.9 171.5c-26.2 3.8-36.7 36.1-17.7 54.6l105.7 103-25 145.5c-4.5 26.3 23.2 46 46.4 33.7L288 439.6l130.7 68.7c23.2 12.2 50.9-7.4 46.4-33.700l-25-145.5 105.7-103c19-18.5 8.5-50.8-17.7-54.6L382 150.2 316.7 17.8c-11.7-23.6-45.6-23.9-57.4 0z" fill="#ffa21d" transform="translate(597.9 23.8)"/><path d="M259.3 17.8L194 150.2 47.9 171.5c-26.2 3.8-36.7 36.1-17.7 54.6l105.7 103-25 145.5c-4.5 26.3 23.2 46 46.4 33.7L288 439.6l130.7 68.7c23.2 12.2 50.9-7.4 46.4-33.700l-25-145.5 105.7-103c19-18.5 8.5-50.8-17.7-54.6L382 150.2 316.7 17.8c-11.7-23.6-45.6-23.9-57.4 0z" fill="#ffa21d" transform="translate(1173.9 23.8)"/><path d="M259.3 17.8L194 150.2 47.9 171.5c-26.2 3.8-36.7 36.1-17.7 54.6l105.7 103-25 145.5c-4.5 26.3 23.2 46 46.4 33.7L288 439.6l130.7 68.7c23.2 12.2 50.9-7.4 46.4-33.700l-25-145.5 105.7-103c19-18.5 8.5-50.8-17.7-54.6L382 150.2 316.7 17.8c-11.7-23.6-45.6-23.9-57.4 0z" fill="#ffa21d" transform="translate(1749.9 23.8)"/><path d="M259.3 17.8L194 150.2 47.9 171.5c-26.2 3.8-36.7 36.1-17.7 54.6l105.7 103-25 145.5c-4.5 26.3 23.2 46 46.4 33.7L288 439.6l130.7 68.7c23.2 12.2 50.9-7.4 46.4-33.700l-25-145.5 105.7-103c19-18.5 8.5-50.8-17.7-54.6L382 150.2 316.7 17.8c-11.7-23.6-45.6-23.9-57.4 0z" fill="#293240" transform="translate(2325.9 23.8)"/></svg><span class="t" style="left:1172.26px;top:629.00px;font-size:14px;line-height:16px;color:#3a4150;letter-spacing:-0.159px;">(4.4)</span>
<span class="t" style="left:1348.90px;top:629.00px;font-size:14px;line-height:16px;color:#3a4150;letter-spacing:0.414px;">WorkDo</span>
<span class="t" style="left:1528.65px;top:629.00px;font-size:14px;line-height:16px;color:#3a4150;letter-spacing:0.26px;">11-09-2024</span>
<div class="abtn" style="left:1727px;top:621.00px;background:#ffa21d;width:33px"></div>
<svg class="ic" style="left:1736px;top:629px" width="16" height="16" viewBox="-0.755 -1.259 26.853 26.853" fill="none" stroke="#fff" stroke-width="1.75" stroke-linecap="round" stroke-linejoin="round"><circle cx="12" cy="12" r="2"/><path d="M22 12c-2.667 4.667 -6 7 -10 7s-7.333 -2.333 -10 -7c2.667 -4.667 6 -7 10 -7s7.333 2.333 10 7"/></svg>
<div class="abtn" style="left:1768px;top:621.00px;background:#3ec9d6"></div>
<svg class="ic" style="left:1777px;top:629px" width="16" height="16" viewBox="-0.084 -1.427 26.853 26.853" fill="none" stroke="#fff" stroke-width="1.75" stroke-linecap="round" stroke-linejoin="round"><path d="M4 20h4l10.5 -10.5a1.5 1.5 0 0 0 -4 -4l-10.5 10.5v4"/><line x1="13.5" y1="6.5" x2="17.5" y2="10.5"/></svg>
<div class="abtn" style="left:1809px;top:621.00px;background:#ff3a6e"></div>
<svg class="ic" style="left:1817px;top:629px" width="16" height="16" viewBox="-1.572 -1.076 26.483 26.483" fill="none" stroke="#fff" stroke-width="1.75" stroke-linecap="round" stroke-linejoin="round"><line x1="4" y1="7" x2="20" y2="7"/><line x1="10" y1="11" x2="10" y2="17"/><line x1="14" y1="11" x2="14" y2="17"/><path d="M5 7l1 12a2 2 0 0 0 2 2h8a2 2 0 0 0 2 -2l1 -12"/><path d="M9 7v-3a1 1 0 0 1 1 -1h4a1 1 0 0 1 1 1v3"/></svg>
<div class="rline" style="top:714px;height:2px"></div>
<span class="t" style="left:335.40px;top:682.00px;font-size:14px;line-height:16px;color:#3a4150;">7</span>
<span class="t" style="left:421.45px;top:682.00px;font-size:14px;line-height:16px;color:#3a4150;letter-spacing:-0.75px;">USA</span>
<span class="t" style="left:584.98px;top:682.00px;font-size:14px;line-height:16px;color:#3a4150;letter-spacing:0.308px;">New York</span>
<span class="t" style="left:801.94px;top:682.00px;font-size:14px;line-height:16px;color:#3a4150;letter-spacing:0.089px;">IT Hubs</span>
<svg class="ic" style="left:1093px;top:682px" width="82" height="16" viewBox="0 0 2998.9 585.1"><path d="M259.3 17.8L194 150.2 47.9 171.5c-26.2 3.8-36.7 36.1-17.7 54.6l105.7 103-25 145.5c-4.5 26.3 23.2 46 46.4 33.7L288 439.6l130.7 68.7c23.2 12.2 50.9-7.4 46.4-33.700l-25-145.5 105.7-103c19-18.5 8.5-50.8-17.7-54.6L382 150.2 316.7 17.8c-11.7-23.6-45.6-23.9-57.4 0z" fill="#ffa21d" transform="translate(21.9 14.6)"/><path d="M259.3 17.8L194 150.2 47.9 171.5c-26.2 3.8-36.7 36.1-17.7 54.6l105.7 103-25 145.5c-4.5 26.3 23.2 46 46.4 33.7L288 439.6l130.7 68.7c23.2 12.2 50.9-7.4 46.4-33.700l-25-145.5 105.7-103c19-18.5 8.5-50.8-17.7-54.6L382 150.2 316.7 17.8c-11.7-23.6-45.6-23.9-57.4 0z" fill="#ffa21d" transform="translate(597.9 14.6)"/><path d="M259.3 17.8L194 150.2 47.9 171.5c-26.2 3.8-36.7 36.1-17.7 54.6l105.7 103-25 145.5c-4.5 26.3 23.2 46 46.4 33.7L288 439.6l130.7 68.7c23.2 12.2 50.9-7.4 46.4-33.700l-25-145.5 105.7-103c19-18.5 8.5-50.8-17.7-54.6L382 150.2 316.7 17.8c-11.7-23.6-45.6-23.9-57.4 0z" fill="#ffa21d" transform="translate(1173.9 14.6)"/><path d="M259.3 17.8L194 150.2 47.9 171.5c-26.2 3.8-36.7 36.1-17.7 54.6l105.7 103-25 145.5c-4.5 26.3 23.2 46 46.4 33.7L288 439.6l130.7 68.7c23.2 12.2 50.9-7.4 46.4-33.700l-25-145.5 105.7-103c19-18.5 8.5-50.8-17.7-54.6L382 150.2 316.7 17.8c-11.7-23.6-45.6-23.9-57.4 0z" fill="#ffa21d" transform="translate(1749.9 14.6)"/><g transform="translate(2325.9 14.6)"><path d="M259.3 17.8L194 150.2 47.9 171.5c-26.2 3.8-36.7 36.1-17.7 54.6l105.7 103-25 145.5c-4.5 26.3 23.2 46 46.4 33.7L288 439.6l130.7 68.7c23.2 12.2 50.9-7.4 46.4-33.700l-25-145.5 105.7-103c19-18.5 8.5-50.8-17.7-54.6L382 150.2 316.7 17.8c-11.7-23.6-45.6-23.9-57.4 0z" fill="#ffa21d"/><g clip-path="url(#rh)"><path d="M259.3 17.8L194 150.2 47.9 171.5c-26.2 3.8-36.7 36.1-17.7 54.6l105.7 103-25 145.5c-4.5 26.3 23.2 46 46.4 33.7L288 439.6l130.7 68.7c23.2 12.2 50.9-7.4 46.4-33.700l-25-145.5 105.7-103c19-18.5 8.5-50.8-17.7-54.6L382 150.2 316.7 17.8c-11.7-23.6-45.6-23.9-57.4 0z" fill="#fff" transform="translate(288 285) scale(0.64) translate(-288 -285)"/></g></g></svg><span class="t" style="left:1171.17px;top:682.00px;font-size:14px;line-height:16px;color:#3a4150;letter-spacing:-0.159px;">(4.6)</span>
<span class="t" style="left:1348.90px;top:682.00px;font-size:14px;line-height:16px;color:#3a4150;letter-spacing:0.414px;">WorkDo</span>
<span class="t" style="left:1528.65px;top:682.00px;font-size:14px;line-height:16px;color:#3a4150;letter-spacing:0.26px;">11-09-2024</span>
<div class="abtn" style="left:1727px;top:674.00px;background:#ffa21d;width:33px"></div>
<svg class="ic" style="left:1736px;top:682px" width="16" height="16" viewBox="-0.755 -1.259 26.853 26.853" fill="none" stroke="#fff" stroke-width="1.75" stroke-linecap="round" stroke-linejoin="round"><circle cx="12" cy="12" r="2"/><path d="M22 12c-2.667 4.667 -6 7 -10 7s-7.333 -2.333 -10 -7c2.667 -4.667 6 -7 10 -7s7.333 2.333 10 7"/></svg>
<div class="abtn" style="left:1768px;top:674.00px;background:#3ec9d6"></div>
<svg class="ic" style="left:1777px;top:682px" width="16" height="16" viewBox="-0.084 -1.427 26.853 26.853" fill="none" stroke="#fff" stroke-width="1.75" stroke-linecap="round" stroke-linejoin="round"><path d="M4 20h4l10.5 -10.5a1.5 1.5 0 0 0 -4 -4l-10.5 10.5v4"/><line x1="13.5" y1="6.5" x2="17.5" y2="10.5"/></svg>
<div class="abtn" style="left:1809px;top:674.00px;background:#ff3a6e"></div>
<svg class="ic" style="left:1817px;top:682px" width="16" height="16" viewBox="-1.572 -1.076 26.483 26.483" fill="none" stroke="#fff" stroke-width="1.75" stroke-linecap="round" stroke-linejoin="round"><line x1="4" y1="7" x2="20" y2="7"/><line x1="10" y1="11" x2="10" y2="17"/><line x1="14" y1="11" x2="14" y2="17"/><path d="M5 7l1 12a2 2 0 0 0 2 2h8a2 2 0 0 0 2 -2l1 -12"/><path d="M9 7v-3a1 1 0 0 1 1 -1h4a1 1 0 0 1 1 1v3"/></svg>
<div class="rline" style="top:767px;height:2px"></div>
<span class="t" style="left:335.40px;top:734.00px;font-size:14px;line-height:16px;color:#3a4150;">8</span>
<span class="t" style="left:421.59px;top:734.00px;font-size:14px;line-height:16px;color:#3a4150;letter-spacing:0.419px;">india</span>
<span class="t" style="left:584.98px;top:734.00px;font-size:14px;line-height:16px;color:#3a4150;letter-spacing:0.321px;">Bangalore</span>
<span class="t" style="left:802.08px;top:734.00px;font-size:14px;line-height:16px;color:#3a4150;letter-spacing:0.131px;">Financials</span>
<svg class="ic" style="left:1093px;top:735px" width="82" height="16" viewBox="0 0 2998.9 585.1"><path d="M259.3 17.8L194 150.2 47.9 171.5c-26.2 3.8-36.7 36.1-17.7 54.6l105.7 103-25 145.5c-4.5 26.3 23.2 46 46.4 33.7L288 439.6l130.7 68.7c23.2 12.2 50.9-7.4 46.4-33.700l-25-145.5 105.7-103c19-18.5 8.5-50.8-17.7-54.6L382 150.2 316.7 17.8c-11.7-23.6-45.6-23.9-57.4 0z" fill="#ffa21d" transform="translate(21.9 5.5)"/><path d="M259.3 17.8L194 150.2 47.9 171.5c-26.2 3.8-36.7 36.1-17.7 54.6l105.7 103-25 145.5c-4.5 26.3 23.2 46 46.4 33.7L288 439.6l130.7 68.7c23.2 12.2 50.9-7.4 46.4-33.700l-25-145.5 105.7-103c19-18.5 8.5-50.8-17.7-54.6L382 150.2 316.7 17.8c-11.7-23.6-45.6-23.9-57.4 0z" fill="#ffa21d" transform="translate(597.9 5.5)"/><path d="M259.3 17.8L194 150.2 47.9 171.5c-26.2 3.8-36.7 36.1-17.7 54.6l105.7 103-25 145.5c-4.5 26.3 23.2 46 46.4 33.7L288 439.6l130.7 68.7c23.2 12.2 50.9-7.4 46.4-33.700l-25-145.5 105.7-103c19-18.5 8.5-50.8-17.7-54.6L382 150.2 316.7 17.8c-11.7-23.6-45.6-23.9-57.4 0z" fill="#ffa21d" transform="translate(1173.9 5.5)"/><path d="M259.3 17.8L194 150.2 47.9 171.5c-26.2 3.8-36.7 36.1-17.7 54.6l105.7 103-25 145.5c-4.5 26.3 23.2 46 46.4 33.7L288 439.6l130.7 68.7c23.2 12.2 50.9-7.4 46.4-33.700l-25-145.5 105.7-103c19-18.5 8.5-50.8-17.7-54.6L382 150.2 316.7 17.8c-11.7-23.6-45.6-23.9-57.4 0z" fill="#293240" transform="translate(1749.9 5.5)"/><path d="M259.3 17.8L194 150.2 47.9 171.5c-26.2 3.8-36.7 36.1-17.7 54.6l105.7 103-25 145.5c-4.5 26.3 23.2 46 46.4 33.7L288 439.6l130.7 68.7c23.2 12.2 50.9-7.4 46.4-33.700l-25-145.5 105.7-103c19-18.5 8.5-50.8-17.7-54.6L382 150.2 316.7 17.8c-11.7-23.6-45.6-23.9-57.4 0z" fill="#293240" transform="translate(2325.9 5.5)"/></svg><span class="t" style="left:1172.26px;top:734.00px;font-size:14px;line-height:16px;color:#3a4150;letter-spacing:-0.159px;">(3.4)</span>
<span class="t" style="left:1348.90px;top:734.00px;font-size:14px;line-height:16px;color:#3a4150;letter-spacing:0.414px;">WorkDo</span>
<span class="t" style="left:1528.65px;top:734.00px;font-size:14px;line-height:16px;color:#3a4150;letter-spacing:0.26px;">11-09-2024</span>
<div class="abtn" style="left:1727px;top:727.00px;background:#ffa21d;width:33px"></div>
<svg class="ic" style="left:1736px;top:735px" width="16" height="16" viewBox="-0.755 -1.259 26.853 26.853" fill="none" stroke="#fff" stroke-width="1.75" stroke-linecap="round" stroke-linejoin="round"><circle cx="12" cy="12" r="2"/><path d="M22 12c-2.667 4.667 -6 7 -10 7s-7.333 -2.333 -10 -7c2.667 -4.667 6 -7 10 -7s7.333 2.333 10 7"/></svg>
<div class="abtn" style="left:1768px;top:727.00px;background:#3ec9d6"></div>
<svg class="ic" style="left:1777px;top:735px" width="16" height="16" viewBox="-0.084 -1.427 26.853 26.853" fill="none" stroke="#fff" stroke-width="1.75" stroke-linecap="round" stroke-linejoin="round"><path d="M4 20h4l10.5 -10.5a1.5 1.5 0 0 0 -4 -4l-10.5 10.5v4"/><line x1="13.5" y1="6.5" x2="17.5" y2="10.5"/></svg>
<div class="abtn" style="left:1809px;top:727.00px;background:#ff3a6e"></div>
<svg class="ic" style="left:1817px;top:735px" width="16" height="16" viewBox="-1.572 -1.076 26.483 26.483" fill="none" stroke="#fff" stroke-width="1.75" stroke-linecap="round" stroke-linejoin="round"><line x1="4" y1="7" x2="20" y2="7"/><line x1="10" y1="11" x2="10" y2="17"/><line x1="14" y1="11" x2="14" y2="17"/><path d="M5 7l1 12a2 2 0 0 0 2 2h8a2 2 0 0 0 2 -2l1 -12"/><path d="M9 7v-3a1 1 0 0 1 1 -1h4a1 1 0 0 1 1 1v3"/></svg>
<div class="rline" style="top:820px;height:1px"></div>
<span class="t" style="left:335.40px;top:787.00px;font-size:14px;line-height:16px;color:#3a4150;">9</span>
<span class="t" style="left:421.59px;top:787.00px;font-size:14px;line-height:16px;color:#3a4150;letter-spacing:0.419px;">india</span>
<span class="t" style="left:585.40px;top:787.00px;font-size:14px;line-height:16px;color:#3a4150;letter-spacing:0.305px;">Gujarat</span>
<span class="t" style="left:802.92px;top:787.00px;font-size:14px;line-height:16px;color:#3a4150;letter-spacing:0.339px;">Technology</span>
<svg class="ic" style="left:1093px;top:787px" width="82" height="16" viewBox="0 0 2998.9 585.1"><path d="M259.3 17.8L194 150.2 47.9 171.5c-26.2 3.8-36.7 36.1-17.7 54.6l105.7 103-25 145.5c-4.5 26.3 23.2 46 46.4 33.7L288 439.6l130.7 68.7c23.2 12.2 50.9-7.4 46.4-33.700l-25-145.5 105.7-103c19-18.5 8.5-50.8-17.7-54.6L382 150.2 316.7 17.8c-11.7-23.6-45.6-23.9-57.4 0z" fill="#ffa21d" transform="translate(21.9 32.9)"/><path d="M259.3 17.8L194 150.2 47.9 171.5c-26.2 3.8-36.7 36.1-17.7 54.6l105.7 103-25 145.5c-4.5 26.3 23.2 46 46.4 33.7L288 439.6l130.7 68.7c23.2 12.2 50.9-7.4 46.4-33.700l-25-145.5 105.7-103c19-18.5 8.5-50.8-17.7-54.6L382 150.2 316.7 17.8c-11.7-23.6-45.6-23.9-57.4 0z" fill="#ffa21d" transform="translate(597.9 32.9)"/><path d="M259.3 17.8L194 150.2 47.9 171.5c-26.2 3.8-36.7 36.1-17.7 54.6l105.7 103-25 145.5c-4.5 26.3 23.2 46 46.4 33.7L288 439.6l130.7 68.7c23.2 12.2 50.9-7.4 46.4-33.700l-25-145.5 105.7-103c19-18.5 8.5-50.8-17.7-54.6L382 150.2 316.7 17.8c-11.7-23.6-45.6-23.9-57.4 0z" fill="#ffa21d" transform="translate(1173.9 32.9)"/><path d="M259.3 17.8L194 150.2 47.9 171.5c-26.2 3.8-36.7 36.1-17.7 54.6l105.7 103-25 145.5c-4.5 26.3 23.2 46 46.4 33.7L288 439.6l130.7 68.7c23.2 12.2 50.9-7.4 46.4-33.700l-25-145.5 105.7-103c19-18.5 8.5-50.8-17.7-54.6L382 150.2 316.7 17.8c-11.7-23.6-45.6-23.9-57.4 0z" fill="#ffa21d" transform="translate(1749.9 32.9)"/><g transform="translate(2325.9 32.9)"><path d="M259.3 17.8L194 150.2 47.9 171.5c-26.2 3.8-36.7 36.1-17.7 54.6l105.7 103-25 145.5c-4.5 26.3 23.2 46 46.4 33.7L288 439.6l130.7 68.7c23.2 12.2 50.9-7.4 46.4-33.700l-25-145.5 105.7-103c19-18.5 8.5-50.8-17.7-54.6L382 150.2 316.7 17.8c-11.7-23.6-45.6-23.9-57.4 0z" fill="#ffa21d"/><g clip-path="url(#rh)"><path d="M259.3 17.8L194 150.2 47.9 171.5c-26.2 3.8-36.7 36.1-17.7 54.6l105.7 103-25 145.5c-4.5 26.3 23.2 46 46.4 33.7L288 439.6l130.7 68.7c23.2 12.2 50.9-7.4 46.4-33.700l-25-145.5 105.7-103c19-18.5 8.5-50.8-17.7-54.6L382 150.2 316.7 17.8c-11.7-23.6-45.6-23.9-57.4 0z" fill="#fff" transform="translate(288 285) scale(0.64) translate(-288 -285)"/></g></g></svg><span class="t" style="left:1171.17px;top:787.00px;font-size:14px;line-height:16px;color:#3a4150;letter-spacing:-0.159px;">(4.6)</span>
<span class="t" style="left:1348.90px;top:787.00px;font-size:14px;line-height:16px;color:#3a4150;letter-spacing:0.414px;">WorkDo</span>
<span class="t" style="left:1528.65px;top:787.00px;font-size:14px;line-height:16px;color:#3a4150;letter-spacing:0.26px;">11-09-2024</span>
<div class="abtn" style="left:1727px;top:779.00px;background:#ffa21d;width:33px"></div>
<svg class="ic" style="left:1736px;top:787px" width="16" height="16" viewBox="-0.755 -1.259 26.853 26.853" fill="none" stroke="#fff" stroke-width="1.75" stroke-linecap="round" stroke-linejoin="round"><circle cx="12" cy="12" r="2"/><path d="M22 12c-2.667 4.667 -6 7 -10 7s-7.333 -2.333 -10 -7c2.667 -4.667 6 -7 10 -7s7.333 2.333 10 7"/></svg>
<div class="abtn" style="left:1768px;top:779.00px;background:#3ec9d6"></div>
<svg class="ic" style="left:1777px;top:787px" width="16" height="16" viewBox="-0.084 -1.427 26.853 26.853" fill="none" stroke="#fff" stroke-width="1.75" stroke-linecap="round" stroke-linejoin="round"><path d="M4 20h4l10.5 -10.5a1.5 1.5 0 0 0 -4 -4l-10.5 10.5v4"/><line x1="13.5" y1="6.5" x2="17.5" y2="10.5"/></svg>
<div class="abtn" style="left:1809px;top:779.00px;background:#ff3a6e"></div>
<svg class="ic" style="left:1817px;top:787px" width="16" height="16" viewBox="-1.572 -1.076 26.483 26.483" fill="none" stroke="#fff" stroke-width="1.75" stroke-linecap="round" stroke-linejoin="round"><line x1="4" y1="7" x2="20" y2="7"/><line x1="10" y1="11" x2="10" y2="17"/><line x1="14" y1="11" x2="14" y2="17"/><path d="M5 7l1 12a2 2 0 0 0 2 2h8a2 2 0 0 0 2 -2l1 -12"/><path d="M9 7v-3a1 1 0 0 1 1 -1h4a1 1 0 0 1 1 1v3"/></svg>
<span class="t" style="left:310.27px;top:867.00px;font-size:14px;line-height:16px;color:#3a4150;letter-spacing:0.265px;">Showing 1 to 9 of 9 entries</span>
<div class="pag"><div class="pcur"></div></div>
<svg class="ic" style="left:1761px;top:865px" width="16" height="16" viewBox="-0.160 -0.480 25.600 25.600" fill="none" stroke="#525b69" stroke-width="1.8" stroke-linecap="round" stroke-linejoin="round"><polyline points="15 6 9 12 15 18"/></svg>
<svg class="ic" style="left:1836px;top:865px" width="16" height="16" viewBox="-0.800 -0.480 25.600 25.600" fill="none" stroke="#525b69" stroke-width="1.8" stroke-linecap="round" stroke-linejoin="round"><polyline points="9 6 15 12 9 18"/></svg>
<span class="t" style="left:1806.30px;top:864.60px;font-size:16px;line-height:17px;color:#fff;transform:translateX(-50%);">1</span>
<div class="side">
<svg class="ic" style="left:60px;top:20px" width="140" height="40" viewBox="60 20 140 40" fill="none" stroke-linecap="round" stroke-linejoin="round">
<g stroke="#022536" stroke-width="6.3">
<path d="M70.3 29.85H76.4A10 10 0 0 1 76.4 49.85H70.3"/>
<path d="M94.8 49.8L98.3 42.3"/>
<path d="M104.7 29.8L115 49.8"/>
<path d="M135 29.85H124.4A5 5 0 0 0 124.4 39.85H131.8A5 5 0 0 1 131.8 49.85H128.8"/>
<path d="M149.6 29.8V49.8"/>
<path d="M167.1 29.8V49.8"/>
</g>
<path d="M143 39.85H189" stroke="#ffffff" stroke-width="9" stroke-linecap="butt"/>
<path d="M69 39.85H71.4" stroke="#13b25d" stroke-width="6.2"/>
<path d="M144.4 39.85H185.6" stroke="#13b25d" stroke-width="6.2"/>
</svg>
<div class="ibox" style="top:88.0px"></div>
<svg class="ic" style="left:30px;top:97px" width="19" height="19" viewBox="-1.000 -0.867 25.333 25.333" fill="none" stroke="#4b5568" stroke-width="2" stroke-linecap="round" stroke-linejoin="round"><path d="M6 4h10l4 4v10a2 2 0 0 1 -2 2h-12a2 2 0 0 1 -2 -2v-12a2 2 0 0 1 2 -2"/><circle cx="12" cy="14" r="2"/><polyline points="14 4 14 8 8 8 8 4"/></svg>
<span class="t" style="left:71.97px;top:97.80px;font-size:14.1px;line-height:16px;color:#333333;letter-spacing:0.588px;-webkit-text-stroke:0.3px #333333;">Retainer</span>
<div class="ibox" style="top:144.0px"></div>
<svg class="ic" style="left:30px;top:153px" width="19" height="19" viewBox="-1.000 -0.867 25.333 25.333" fill="none" stroke="#4b5568" stroke-width="2" stroke-linecap="round" stroke-linejoin="round"><path d="M14 3v4a1 1 0 0 0 1 1h4"/><path d="M17 21h-10a2 2 0 0 1 -2 -2v-14a2 2 0 0 1 2 -2h7l5 5v11a2 2 0 0 1 -2 2z"/><line x1="9" y1="7" x2="10" y2="7"/><line x1="9" y1="13" x2="15" y2="13"/><line x1="13" y1="17" x2="15" y2="17"/></svg>
<span class="t" style="left:71.83px;top:153.80px;font-size:14.1px;line-height:16px;color:#333333;letter-spacing:0.629px;-webkit-text-stroke:0.3px #333333;">Invoice</span>
<div class="ibox" style="top:200.0px"></div>
<svg class="ic" style="left:30px;top:209px" width="19" height="19" viewBox="-1.000 -0.867 25.333 25.333" fill="none" stroke="#4b5568" stroke-width="2" stroke-linecap="round" stroke-linejoin="round"><circle cx="6" cy="19" r="2"/><circle cx="17" cy="19" r="2"/><path d="M17 17h-11v-14h-2"/><path d="M6 5l14 1l-1 7h-13"/></svg>
<span class="t" style="left:71.97px;top:209.80px;font-size:14.1px;line-height:16px;color:#333333;letter-spacing:0.388px;-webkit-text-stroke:0.3px #333333;">Purchases</span>
<svg class="ic" style="left:213px;top:210px" width="19" height="19" viewBox="-0.414 -0.414 26.207 26.207" fill="none" stroke="#2a2d33" stroke-width="2" stroke-linecap="round" stroke-linejoin="round"><polyline points="9 6 15 12 9 18"/></svg>
<div class="ibox" style="top:256.0px"></div>
<svg class="ic" style="left:30px;top:265px" width="19" height="19" viewBox="-1.000 -0.867 25.333 25.333" fill="none" stroke="#4b5568" stroke-width="2" stroke-linecap="round" stroke-linejoin="round"><rect x="4" y="4" width="16" height="16" rx="2"/><path d="M9 12l2 2l4 -4"/></svg>
<span class="t" style="left:71.97px;top:265.80px;font-size:14.1px;line-height:16px;color:#333333;letter-spacing:0.541px;-webkit-text-stroke:0.3px #333333;">Projects</span>
<svg class="ic" style="left:213px;top:266px" width="19" height="19" viewBox="-0.414 -0.414 26.207 26.207" fill="none" stroke="#2a2d33" stroke-width="2" stroke-linecap="round" stroke-linejoin="round"><polyline points="9 6 15 12 9 18"/></svg>
<div class="ibox" style="top:312.0px"></div>
<svg class="ic" style="left:30px;top:321px" width="19" height="19" viewBox="-1.000 -0.867 25.333 25.333" fill="none" stroke="#4b5568" stroke-width="2" stroke-linecap="round" stroke-linejoin="round"><rect x="4" y="4" width="6" height="6" rx="1"/><rect x="14" y="4" width="6" height="6" rx="1"/><rect x="4" y="14" width="6" height="6" rx="1"/><path d="M14 17h6m-3 -3v6"/></svg>
<span class="t" style="left:72.50px;top:321.80px;font-size:14.1px;line-height:16px;color:#333333;letter-spacing:0.678px;-webkit-text-stroke:0.3px #333333;">Accounting</span>
<svg class="ic" style="left:213px;top:322px" width="19" height="19" viewBox="-0.414 -0.414 26.207 26.207" fill="none" stroke="#2a2d33" stroke-width="2" stroke-linecap="round" stroke-linejoin="round"><polyline points="9 6 15 12 9 18"/></svg>
<div class="active"></div>
<div class="ibox" style="top:368px;box-shadow:none"></div>
<svg class="ic" style="left:30px;top:377px" width="19" height="19" viewBox="-1.000 -0.867 25.333 25.333" fill="none" stroke="#0CAF60" stroke-width="2" stroke-linecap="round" stroke-linejoin="round"><path d="M6 17.6l-2 -1.1v-2.5"/><path d="M4 10v-2.5l2 -1.1"/><path d="M10 4.1l2 -1.1l2 1.1"/><path d="M18 6.4l2 1.1v2.5"/><path d="M20 14v2.5l-2 1.12"/><path d="M14 19.9l-2 1.1l-2 -1.1"/><line x1="12" y1="12" x2="14" y2="10.9"/><line x1="18" y1="8.6" x2="20" y2="7.5"/><line x1="12" y1="12" x2="12" y2="14.5"/><line x1="12" y1="18.500" x2="12" y2="21"/><path d="M12 12l-2 -1.12"/><line x1="6" y1="8.6" x2="4" y2="7.5"/></svg>
<span class="t" style="left:71.86px;top:377.90px;font-size:14.4px;line-height:16px;color:#fff;font-weight:700;letter-spacing:0.225px;">HRM</span>
<svg class="ic" style="left:212px;top:377px" width="17" height="17" viewBox="-1.006 -1.316 26.323 26.323" fill="none" stroke="#fff" stroke-width="2" stroke-linecap="round" stroke-linejoin="round"><polyline points="6 9 12 15 18 9"/></svg>
<svg class="ic" style="left:38.05px;top:431.00px" width="12" height="12" viewBox="-6 -6 12 12" fill="none"><circle r="3.2" stroke="#cdd3dd" stroke-width="2"/><path d="M3.2 0A3.2 3.2 0 0 1 0 3.2" stroke="#0CAF60" stroke-width="2"/></svg>
<span class="t" style="left:64.97px;top:430.00px;font-size:14.1px;line-height:16px;color:#333333;letter-spacing:0.373px;">Employee</span>
<svg class="ic" style="left:38.05px;top:479.00px" width="12" height="12" viewBox="-6 -6 12 12" fill="none"><circle r="3.2" stroke="#cdd3dd" stroke-width="2"/><path d="M3.2 0A3.2 3.2 0 0 1 0 3.2" stroke="#0CAF60" stroke-width="2"/></svg>
<span class="t" style="left:64.97px;top:478.00px;font-size:14.1px;line-height:16px;color:#333333;letter-spacing:0.468px;">Payroll</span>
<svg class="ic" style="left:208px;top:478px" width="19" height="19" viewBox="-0.552 -0.552 26.207 26.207" fill="none" stroke="#2a2d33" stroke-width="2" stroke-linecap="round" stroke-linejoin="round"><polyline points="9 6 15 12 9 18"/></svg>
<svg class="ic" style="left:38.05px;top:527.00px" width="12" height="12" viewBox="-6 -6 12 12" fill="none"><circle r="3.2" stroke="#cdd3dd" stroke-width="2"/><path d="M3.2 0A3.2 3.2 0 0 1 0 3.2" stroke="#0CAF60" stroke-width="2"/></svg>
<span class="t" style="left:65.30px;top:526.00px;font-size:14.1px;line-height:16px;color:#333333;letter-spacing:0.582px;">Attendance</span>
<svg class="ic" style="left:208px;top:526px" width="19" height="19" viewBox="-0.552 -0.552 26.207 26.207" fill="none" stroke="#2a2d33" stroke-width="2" stroke-linecap="round" stroke-linejoin="round"><polyline points="9 6 15 12 9 18"/></svg>
<svg class="ic" style="left:38.05px;top:575.00px" width="12" height="12" viewBox="-6 -6 12 12" fill="none"><circle r="3.2" stroke="#cdd3dd" stroke-width="2"/><path d="M3.2 0A3.2 3.2 0 0 1 0 3.2" stroke="#0CAF60" stroke-width="2"/></svg>
<span class="t" style="left:64.97px;top:574.00px;font-size:14.1px;line-height:16px;color:#333333;letter-spacing:0.211px;">Manage Leave</span>
<svg class="ic" style="left:38.05px;top:623.00px" width="12" height="12" viewBox="-6 -6 12 12" fill="none"><circle r="3.2" stroke="#cdd3dd" stroke-width="2"/><path d="M-3.2 0A3.2 3.2 0 0 1 0 -3.2" stroke="#0CAF60" stroke-width="2"/></svg>
<span class="t" style="left:64.97px;top:622.00px;font-size:14.1px;line-height:16px;color:#0CAF60;letter-spacing:0.569px;">Performance</span>
<svg class="ic" style="left:208px;top:622px" width="19" height="19" viewBox="-0.552 -0.552 26.207 26.207" fill="none" stroke="#0CAF60" stroke-width="2" stroke-linecap="round" stroke-linejoin="round"><polyline points="9 6 15 12 9 18"/></svg>
<svg class="ic" style="left:57.65px;top:671.00px" width="12" height="12" viewBox="-6 -6 12 12" fill="none"><circle r="3.2" stroke="#cdd3dd" stroke-width="2"/><path d="M-3.2 0A3.2 3.2 0 0 1 0 -3.2" stroke="#0CAF60" stroke-width="2"/></svg>
<span class="t" style="left:84.73px;top:670.00px;font-size:14.1px;line-height:16px;color:#0CAF60;letter-spacing:0.697px;">Indicator</span>
<svg class="ic" style="left:57.65px;top:719.00px" width="12" height="12" viewBox="-6 -6 12 12" fill="none"><circle r="3.2" stroke="#cdd3dd" stroke-width="2"/><path d="M3.2 0A3.2 3.2 0 0 1 0 3.2" stroke="#0CAF60" stroke-width="2"/></svg>
<span class="t" style="left:85.20px;top:718.00px;font-size:14.1px;line-height:16px;color:#333333;letter-spacing:0.449px;">Appraisal</span>
<svg class="ic" style="left:57.65px;top:767.00px" width="12" height="12" viewBox="-6 -6 12 12" fill="none"><circle r="3.2" stroke="#cdd3dd" stroke-width="2"/><path d="M3.2 0A3.2 3.2 0 0 1 0 3.2" stroke="#0CAF60" stroke-width="2"/></svg>
<span class="t" style="left:85.30px;top:766.00px;font-size:14.1px;line-height:16px;color:#333333;letter-spacing:0.277px;">Goal Tracking</span>
<svg class="ic" style="left:38.05px;top:815.00px" width="12" height="12" viewBox="-6 -6 12 12" fill="none"><circle r="3.2" stroke="#cdd3dd" stroke-width="2"/><path d="M3.2 0A3.2 3.2 0 0 1 0 3.2" stroke="#0CAF60" stroke-width="2"/></svg>
<span class="t" style="left:65.02px;top:814.00px;font-size:14.1px;line-height:16px;color:#333333;letter-spacing:0.661px;">Training</span>
<svg class="ic" style="left:208px;top:814px" width="19" height="19" viewBox="-0.552 -0.552 26.207 26.207" fill="none" stroke="#2a2d33" stroke-width="2" stroke-linecap="round" stroke-linejoin="round"><polyline points="9 6 15 12 9 18"/></svg>
<svg class="ic" style="left:38.05px;top:863.00px" width="12" height="12" viewBox="-6 -6 12 12" fill="none"><circle r="3.2" stroke="#cdd3dd" stroke-width="2"/><path d="M3.2 0A3.2 3.2 0 0 1 0 3.2" stroke="#0CAF60" stroke-width="2"/></svg>
<span class="t" style="left:64.97px;top:862.00px;font-size:14.1px;line-height:16px;color:#333333;letter-spacing:0.349px;">HR Admin</span>
<svg class="ic" style="left:208px;top:862px" width="19" height="19" viewBox="-0.552 -0.552 26.207 26.207" fill="none" stroke="#2a2d33" stroke-width="2" stroke-linecap="round" stroke-linejoin="round"><polyline points="9 6 15 12 9 18"/></svg>
<svg class="ic" style="left:38.05px;top:911.00px" width="12" height="12" viewBox="-6 -6 12 12" fill="none"><circle r="3.2" stroke="#cdd3dd" stroke-width="2"/><path d="M3.2 0A3.2 3.2 0 0 1 0 3.2" stroke="#0CAF60" stroke-width="2"/></svg>
<span class="t" style="left:64.97px;top:910.00px;font-size:14.1px;line-height:16px;color:#333333;letter-spacing:0.178px;">Event</span>
<svg class="ic" style="left:38.05px;top:959.00px" width="12" height="12" viewBox="-6 -6 12 12" fill="none"><circle r="3.2" stroke="#cdd3dd" stroke-width="2"/><path d="M3.2 0A3.2 3.2 0 0 1 0 3.2" stroke="#0CAF60" stroke-width="2"/></svg>
<span class="t" style="left:64.97px;top:958.00px;font-size:14.1px;line-height:16px;color:#333333;letter-spacing:0.715px;">Document</span>
<svg class="ic" style="left:38.05px;top:1007.00px" width="12" height="12" viewBox="-6 -6 12 12" fill="none"><circle r="3.2" stroke="#cdd3dd" stroke-width="2"/><path d="M3.2 0A3.2 3.2 0 0 1 0 3.2" stroke="#0CAF60" stroke-width="2"/></svg>
<span class="t" style="left:65.39px;top:1006.00px;font-size:14.1px;line-height:16px;color:#333333;letter-spacing:0.21px;">Company Policy</span>
<svg class="ic" style="left:38.05px;top:1055.00px" width="12" height="12" viewBox="-6 -6 12 12" fill="none"><circle r="3.2" stroke="#cdd3dd" stroke-width="2"/><path d="M3.2 0A3.2 3.2 0 0 1 0 3.2" stroke="#0CAF60" stroke-width="2"/></svg>
<span class="t" style="left:64.67px;top:1054.00px;font-size:14.1px;line-height:16px;color:#333333;letter-spacing:0.24px;">System Setup</span>
</div>
</body></html>
